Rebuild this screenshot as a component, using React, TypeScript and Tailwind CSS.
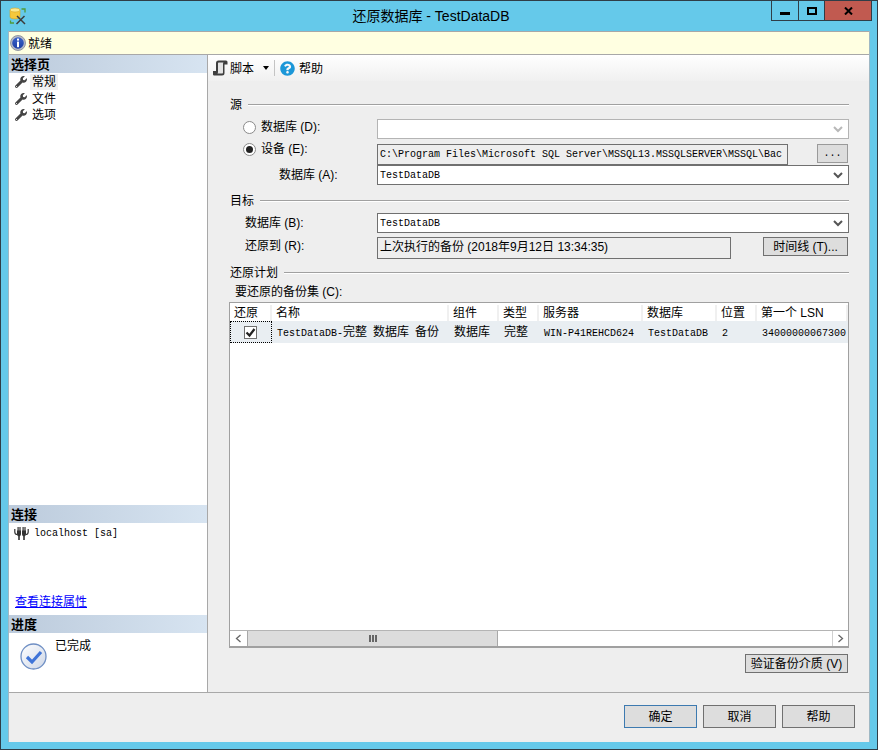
import React from "react";
import { FaWrench, FaQuestionCircle } from "react-icons/fa";

const M = ({ children }: { children: React.ReactNode }) => (
  <span className="font-['Liberation_Mono','Noto_Sans_CJK_SC',monospace] text-[10px]">{children}</span>
);

function DbIcon() {
  return (
    <svg width="18" height="18" viewBox="0 0 18 18" className="shrink-0">
      <path d="M1 3h10v7c0 2.500-10 2.500-10 0z" fill="#f5c83c" stroke="#d9a520" strokeWidth="0.6" />
      <ellipse cx="6" cy="3" rx="5" ry="2" fill="#fbe98f" stroke="#d9a520" strokeWidth="0.6" />
      <path d="M12.500 2h3.500v3.500M1.500 13.500V16H5" fill="none" stroke="#4f9a3a" strokeWidth="1.300" />
      <path d="M7.500 17l8-8M16 17l-8-8" stroke="#3c3c3c" strokeWidth="1.500" />
    </svg>
  );
}

function InfoIcon() {
  return (
    <svg width="16" height="16" viewBox="0 0 16 16" className="shrink-0">
      <defs>
        <linearGradient id="infoFill" x1="0" y1="0" x2="0" y2="1">
          <stop offset="0" stopColor="#3a62c8" />
          <stop offset="1" stopColor="#1c3fa6" />
        </linearGradient>
      </defs>
      <circle cx="8" cy="8" r="7.500" fill="#b8bcc8" stroke="#7d8494" strokeWidth="0.800" />
      <circle cx="8" cy="8" r="5.800" fill="url(#infoFill)" />
      <rect x="7" y="3.600" width="2" height="2" fill="#fff" />
      <rect x="7" y="6.600" width="2" height="5.600" fill="#fff" />
    </svg>
  );
}

function ScriptIcon() {
  return (
    <svg width="15" height="16" viewBox="0 0 15 16" className="shrink-0">
      <path d="M5.500 0.500h7.500a1.500 1.500 0 0 1 1.500 1.500v2.500h-3v8.500a2.500 2.500 0 0 1-2.500 2.500H1.500A1.500 1.500 0 0 1 0 13.500V11h3V3a2.500 2.500 0 0 1 2.500-2.500z" fill="#3f3f3f" />
      <path d="M6 2.500h4.500a2 2 0 0 0-.5 1.500v8.500c0 .5-.2 1-1 1H4.500c.4-.4.500-.9.500-1.500V3.500c0-.6.300-1 1-1z" fill="#e4e4e4" />
    </svg>
  );
}

function PlugIcon() {
  return (
    <svg width="15" height="15" viewBox="0 0 15 15" className="shrink-0">
      <path d="M0.800 3v3c0 1.500 1 2.500 2.500 2.500M14.200 3v3c0 1.500-1 2.500-2.500 2.500" fill="none" stroke="#333" strokeWidth="1.200" />
      <path d="M3 4.500h4v3.500c0 1-.8 2-1.200 2.200V14H4.200v-3.800C3.700 10 3 9 3 8zM8 4.500h4v3.500c0 1-.8 2-1.200 2.200V14H9.200v-3.800C8.700 10 8 9 8 8z" fill="#333" />
      <rect x="3.500" y="1" width="1.200" height="4" fill="#333" />
      <rect x="5.400" y="1" width="1.200" height="4" fill="#333" />
      <rect x="8.500" y="1" width="1.200" height="4" fill="#333" />
      <rect x="10.400" y="1" width="1.200" height="4" fill="#333" />
    </svg>
  );
}

function DoneIcon() {
  return (
    <svg width="27" height="27" viewBox="0 0 27 27" className="shrink-0">
      <defs>
        <linearGradient id="doneFill" x1="0" y1="0" x2="1" y2="1">
          <stop offset="0" stopColor="#ffffff" />
          <stop offset="1" stopColor="#cdd6e6" />
        </linearGradient>
      </defs>
      <circle cx="13.500" cy="13.500" r="12.500" fill="url(#doneFill)" stroke="#6f8fc4" strokeWidth="1.300" />
      <path d="M7 14l5 5 9-10" fill="none" stroke="#3f74d8" strokeWidth="3.200" />
    </svg>
  );
}

function Chevron({ light }: { light?: boolean }) {
  return (
    <svg width="10" height="7" viewBox="0 0 10 7" className="shrink-0">
      <path d="M1 1l4 4 4-4" fill="none" stroke={light ? "#b8b8b8" : "#555"} strokeWidth="2" />
    </svg>
  );
}

function PanelHeader({ title }: { title: string }) {
  return (
    <div className="h-[18px] shrink-0 flex items-center pl-[2px] font-bold text-[13px] leading-none bg-linear-to-r from-[#bccbdc] to-[#d7e4f1]">
      {title}
    </div>
  );
}

function NavItem({ label, active }: { label: string; active?: boolean }) {
  return (
    <div className="h-[16px] flex items-center pl-[6px]">
      <FaWrench className="w-[12px] h-[12px] text-[#444]" />
      <span className={`ml-[3px] px-[2px] h-[16px] leading-[16px] ${active ? "bg-[#f0f0f0]" : ""}`}>{label}</span>
    </div>
  );
}

function SectionHeader({ title, className }: { title: string; className?: string }) {
  return (
    <div className={`h-[16px] flex items-center gap-[6px] pl-[1px] ${className ?? ""}`}>
      <span className="leading-[16px]">{title}</span>
      <div className="flex-1 h-[2px] bg-white border-t border-[#a0a0a0]" />
    </div>
  );
}

function Radio({ checked }: { checked?: boolean }) {
  return (
    <div className="w-[13px] h-[13px] rounded-full border border-[#8a8a8a] bg-white flex items-center justify-center shrink-0">
      {checked && <div className="w-[7px] h-[7px] rounded-full bg-[#222]" />}
    </div>
  );
}

function SelectBox({ value, disabled }: { value?: string; disabled?: boolean }) {
  return (
    <div
      className={`flex-1 h-full bg-white border flex items-center pl-[2px] pr-[5px] justify-between ${
        disabled ? "border-[#b4b4b4]" : "border-[#707070]"
      }`}
    >
      <M>{value}</M>
      <Chevron light={disabled} />
    </div>
  );
}

function GrayButton({ children, className }: { children: React.ReactNode; className?: string }) {
  return (
    <div className={`bg-[#dddddd] border flex items-center justify-center whitespace-nowrap ${className ?? "border-[#707070]"}`}>
      {children}
    </div>
  );
}

const columns = [
  { title: "还原", width: "w-[42px]" },
  { title: "名称", width: "w-[177px]" },
  { title: "组件", width: "w-[50px]" },
  { title: "类型", width: "w-[40px]" },
  { title: "服务器", width: "w-[104px]" },
  { title: "数据库", width: "w-[74px]" },
  { title: "位置", width: "w-[40px]" },
  { title: "第一个 LSN", width: "w-[91px]" },
];

export default function App() {
  return (
    <div className="w-[878px] h-[750px] bg-[#65c9ea] border border-[#2f3d47] flex flex-col overflow-hidden text-[12px] text-black font-['Liberation_Sans','Noto_Sans_CJK_SC',sans-serif]">
      {/* title bar */}
      <div className="h-[30px] flex items-start shrink-0">
        <div className="pl-[8px] pt-[6px]">
          <DbIcon />
        </div>
        <div className="flex-1 text-center text-[14px] leading-[20px] pt-[5px] pl-[64px]">还原数据库 - TestDataDB</div>
        <div className="flex h-[20px] mr-[5px] border-x border-b border-[#2f3d47]">
          <div className="w-[27px] flex items-center justify-center border-r border-[#2f3d47]">
            <div className="w-[10px] h-[3px] bg-black mt-[5px]" />
          </div>
          <div className="w-[26px] flex items-center justify-center border-r border-[#2f3d47]">
            <div className="w-[10px] h-[8px] border-2 border-black" />
          </div>
          <div className="w-[46px] flex items-center justify-center bg-[#c15a50]">
            <svg width="9" height="8" viewBox="0 0 9 8">
              <path d="M1 0.500l7 7M8 0.500l-7 7" stroke="#000" strokeWidth="2" />
            </svg>
          </div>
        </div>
      </div>

      {/* dialog body */}
      <div className="mx-[7px] flex-1 min-h-0 flex flex-col bg-[#eeeeee] border-l border-r border-[#9fb8c4]">
        <div className="h-[24px] bg-[#ffffe1] border-y border-[#a8a8a8] flex items-center pl-[1px] gap-[2px] shrink-0">
          <InfoIcon />
          <span className="pt-[2px]">就绪</span>
        </div>

        <div className="flex-1 min-h-0 flex">
          {/* left panel */}
          <div className="w-[199px] shrink-0 bg-white border-r border-[#a8a8a8] flex flex-col">
            <PanelHeader title="选择页" />
            <div className="pt-px">
              <NavItem label="常规" active />
              <div className="pt-px">
                <NavItem label="文件" />
              </div>
              <NavItem label="选项" />
            </div>
            <div className="flex-1" />
            <PanelHeader title="连接" />
            <div className="h-[92px] shrink-0 flex flex-col">
              <div className="flex items-center gap-[5px] pl-[5px] pt-[3px] h-[18px]">
                <PlugIcon />
                <M>localhost [sa]</M>
              </div>
              <div className="flex-1" />
              <div className="pl-[6px] h-[16px] leading-[16px] mb-[5px] text-[#0000ff] underline">查看连接属性</div>
            </div>
            <PanelHeader title="进度" />
            <div className="h-[59px] shrink-0 flex pl-[11px] pt-[10px] gap-[8px]">
              <DoneIcon />
              <span className="leading-[16px] -mt-[5px]">已完成</span>
            </div>
          </div>

          {/* right panel */}
          <div className="flex-1 min-w-0 flex flex-col">
            <div className="h-[26px] shrink-0 flex items-center pl-[5px] bg-linear-to-b from-white to-[#f0f0f0]">
              <ScriptIcon />
              <span className="ml-[2px] pt-[2px]">脚本</span>
              <div className="ml-[9px] w-0 h-0 border-x-[3.500px] border-x-transparent border-t-[4px] border-t-black" />
              <div className="ml-[5px] w-px h-[16px] bg-[#c4c4c4]" />
              <FaQuestionCircle className="ml-[5px] w-[15px] h-[15px] text-[#1c97d8]" />
              <span className="ml-[4px] pt-[2px]">帮助</span>
            </div>

            <div className="flex-1 min-h-0 flex flex-col pl-[21px] pr-[20px]">
              <SectionHeader title="源" className="mt-[16px]" />

              <div className="h-[20px] mt-[6px] flex items-center">
                <div className="w-[148px] flex items-center pl-[14px] gap-[5px] shrink-0 -mt-[4px]">
                  <Radio />
                  <span>数据库 (D):</span>
                </div>
                <SelectBox disabled />
              </div>

              <div className="h-[21px] mt-[5px] flex items-start">
                <div className="w-[148px] flex items-center h-[16px] pl-[14px] gap-[5px] shrink-0 -mt-[3px]">
                  <Radio checked />
                  <span>设备 (E):</span>
                </div>
                <div className="w-[411px] h-[21px] shrink-0 bg-[#eeeeee] border border-[#707070] pl-[2px] overflow-hidden whitespace-nowrap leading-[17px]">
                  <M>C:\Program Files\Microsoft SQL Server\MSSQL13.MSSQLSERVER\MSSQL\Bac</M>
                </div>
                <GrayButton className="ml-[29px] w-[31px] h-[19px] border-[#9a9a9a]">
                  <M>...</M>
                </GrayButton>
              </div>

              <div className="h-[20px] flex items-center">
                <div className="w-[148px] pl-[50px] shrink-0">数据库 (A):</div>
                <SelectBox value="TestDataDB" />
              </div>

              <SectionHeader title="目标" className="mt-[8px]" />

              <div className="h-[20px] mt-[4px] flex items-center">
                <div className="w-[148px] pl-[16px] shrink-0">数据库 (B):</div>
                <SelectBox value="TestDataDB" />
              </div>

              <div className="h-[22px] mt-[4px] flex items-start">
                <div className="w-[148px] pl-[16px] h-[18px] leading-[18px] shrink-0">还原到 (R):</div>
                <div className="w-[354px] h-[22px] shrink-0 bg-[#eeeeee] border border-[#707070] pl-[2px] leading-[18px] whitespace-nowrap">
                  上次执行的备份 (2018年9月12日 13:34:35)
                </div>
                <GrayButton className="ml-[32px] w-[85px] h-[19px] border-[#707070]">时间线 (T)...</GrayButton>
              </div>

              <SectionHeader title="还原计划" className="mt-[6px]" />
              <div className="h-[16px] mt-[3px] pl-[6px] leading-[16px]">要还原的备份集 (C):</div>

              {/* backup set table */}
              <div className="mt-[2px] h-[346px] w-[620px] shrink-0 bg-white border border-[#a0a0a0] border-b-2 flex flex-col overflow-hidden">
                <div className="h-[18px] pt-[2px] flex shrink-0 bg-white">
                  {columns.map((c) => (
                    <div key={c.title} className={`${c.width} pl-[4px] shrink-0 border-r-2 border-[#f0f0f0] leading-[16px] whitespace-nowrap overflow-hidden`}>
                      {c.title}
                    </div>
                  ))}
                </div>
                <div className="h-[22px] flex shrink-0 bg-[#e9eef2] items-center whitespace-nowrap">
                  <div className="w-[42px] h-full shrink-0 border border-dotted border-black flex items-center justify-center pr-px bg-[#e9eef2]">
                    <div className="w-[13px] h-[13px] bg-white border border-[#707070] flex items-center justify-center">
                      <svg width="11" height="11" viewBox="0 0 11 11">
                        <path d="M1.500 5.500l3 3 5-6.500" fill="none" stroke="#222" strokeWidth="2.200" />
                      </svg>
                    </div>
                  </div>
                  <div className="w-[177px] shrink-0 pl-[5px]">
                    <M>TestDataDB-</M>完整<M> </M>数据库<M> </M>备份
                  </div>
                  <div className="w-[50px] shrink-0 pl-[5px]">数据库</div>
                  <div className="w-[40px] shrink-0 pl-[5px]">完整</div>
                  <div className="w-[104px] shrink-0 pl-[5px]">
                    <M>WIN-P41REHCD624</M>
                  </div>
                  <div className="w-[74px] shrink-0 pl-[5px]">
                    <M>TestDataDB</M>
                  </div>
                  <div className="w-[40px] shrink-0 pl-[5px]">
                    <M>2</M>
                  </div>
                  <div className="w-[91px] shrink-0 pl-[5px] overflow-hidden">
                    <M>34000000067300</M>
                  </div>
                </div>
                <div className="flex-1" />
                {/* horizontal scrollbar */}
                <div className="h-[16px] shrink-0 flex bg-white border-t border-[#b4b4b4]">
                  <div className="w-[17px] flex items-center justify-center shrink-0">
                    <svg width="7" height="9" viewBox="0 0 7 9">
                      <path d="M5.500 1l-4 3.500 4 3.500" fill="none" stroke="#666" strokeWidth="1.300" />
                    </svg>
                  </div>
                  <div className="w-[251px] bg-[#dcdcdc] border-x border-[#a8a8a8] flex items-center justify-center gap-px shrink-0">
                    <div className="w-[2px] h-[7px] bg-[#666]" />
                    <div className="w-[2px] h-[7px] bg-[#666]" />
                    <div className="w-[2px] h-[7px] bg-[#666]" />
                  </div>
                  <div className="flex-1" />
                  <div className="w-[16px] flex items-center justify-center border-l border-[#d0d0d0] shrink-0">
                    <svg width="7" height="9" viewBox="0 0 7 9">
                      <path d="M1.500 1l4 3.500-4 3.500" fill="none" stroke="#666" strokeWidth="1.300" />
                    </svg>
                  </div>
                </div>
              </div>

              <div className="flex justify-end mt-[6px] pr-px">
                <GrayButton className="w-[103px] h-[19px] border-[#707070]">验证备份介质 (V)</GrayButton>
              </div>
            </div>
          </div>
        </div>

        {/* footer */}
        <div className="h-[50px] shrink-0 border-t border-[#a8a8a8] flex items-start justify-end gap-[6px] pt-[12px] pr-[14px]">
          <GrayButton className="w-[73px] h-[23px] pt-px border-[#3d7ab0]">确定</GrayButton>
          <GrayButton className="w-[73px] h-[23px] pt-px border-[#707070]">取消</GrayButton>
          <GrayButton className="w-[73px] h-[23px] pt-px border-[#707070]">帮助</GrayButton>
        </div>
      </div>
      <div className="h-[7px] shrink-0" />
    </div>
  );
}
